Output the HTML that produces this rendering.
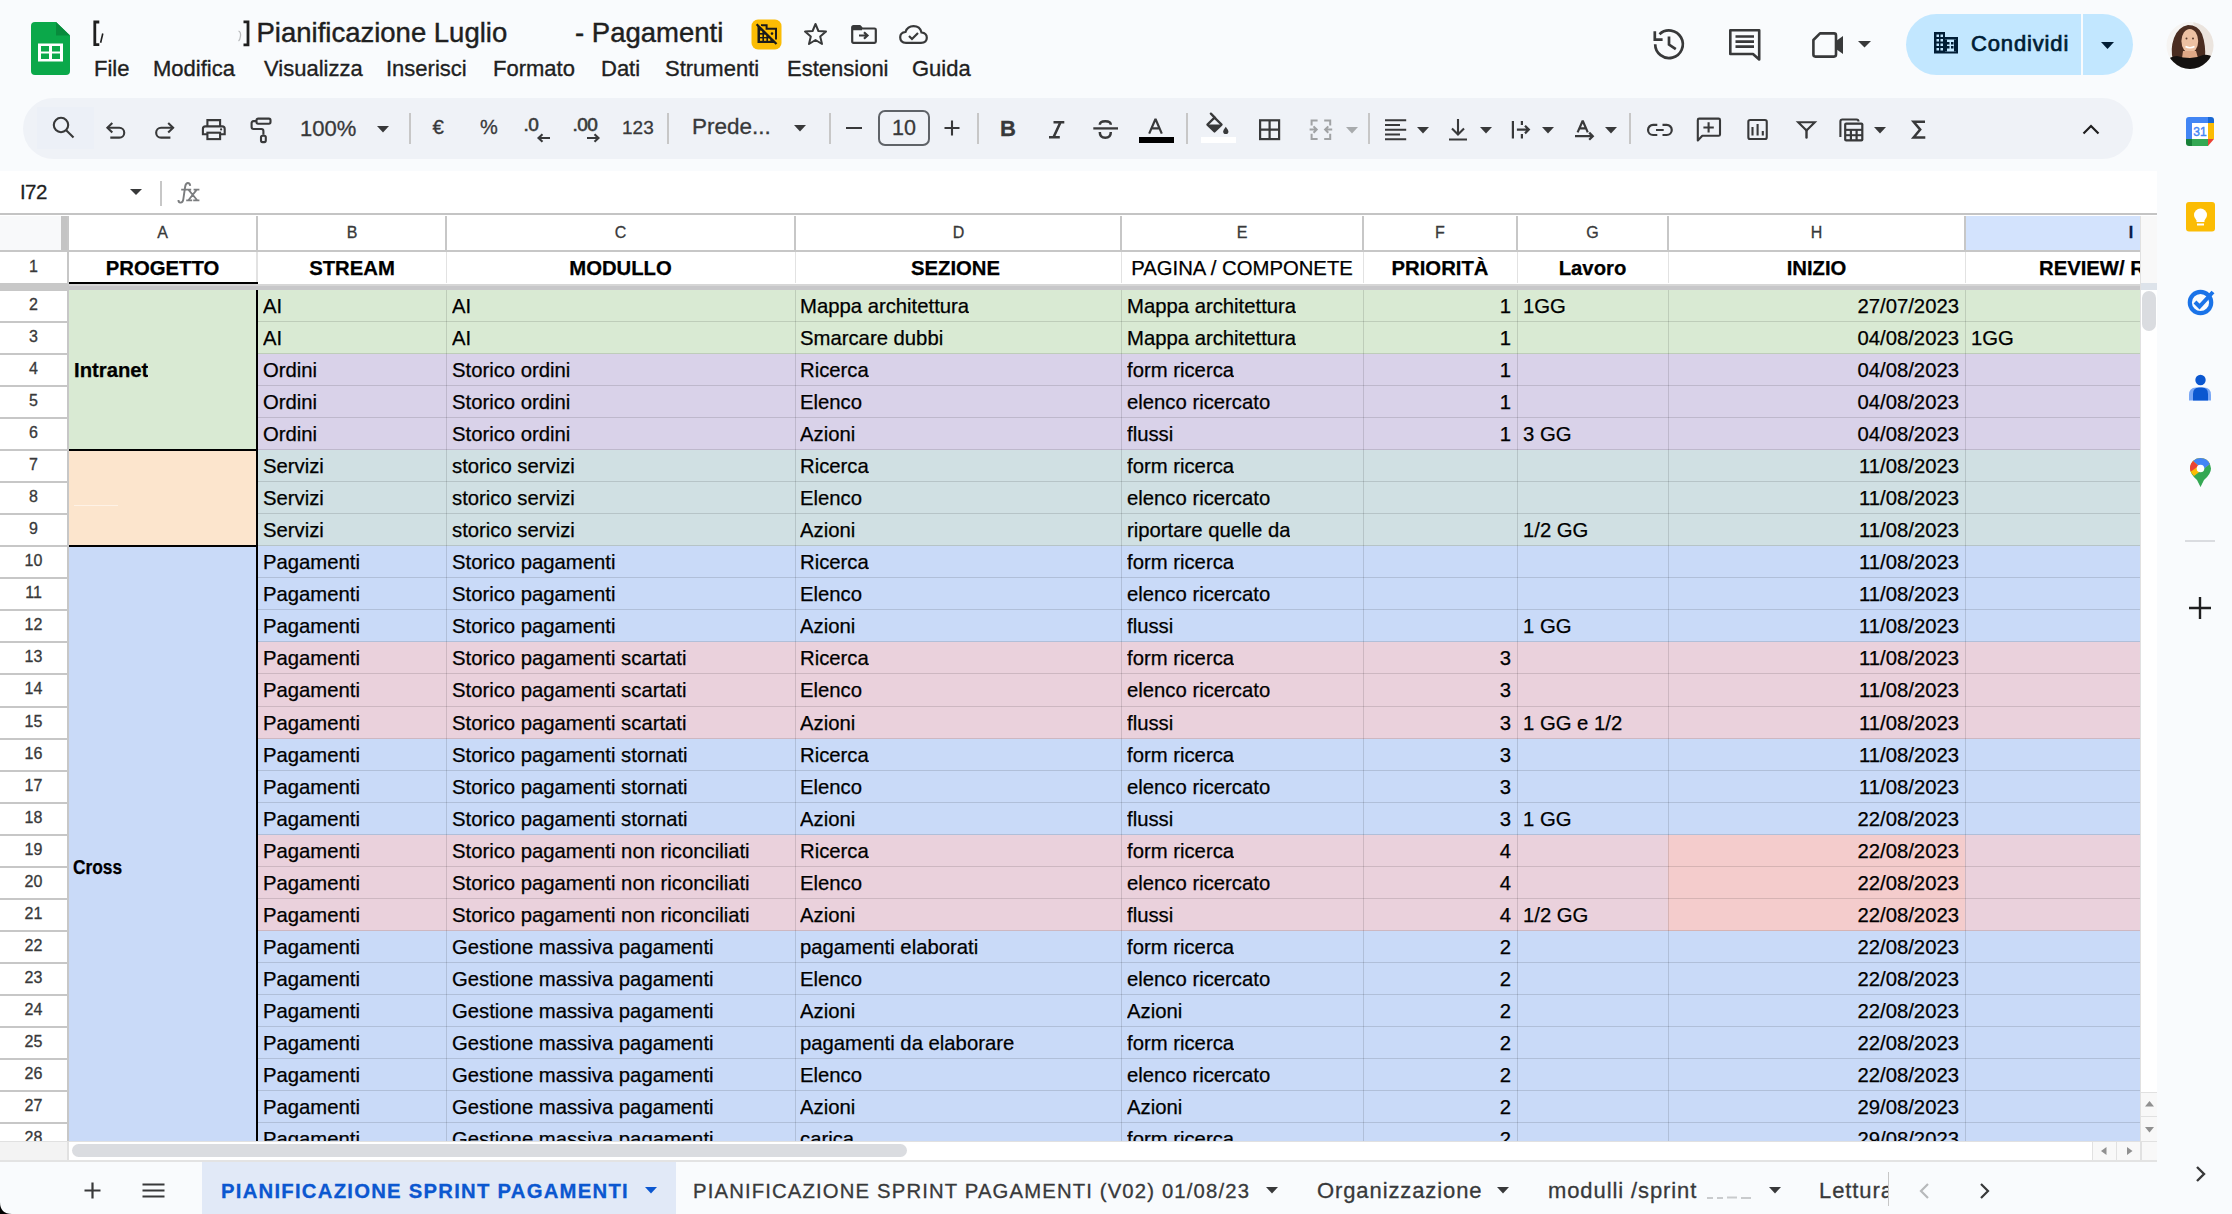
<!DOCTYPE html><html><head><meta charset="utf-8"><title>Sheets</title><style>
*{margin:0;padding:0;box-sizing:border-box}
html,body{width:2232px;height:1214px;overflow:hidden;background:#f9fbfd;font-family:"Liberation Sans", sans-serif;color:#1f1f1f}
.a{position:absolute}
.t{position:absolute;white-space:nowrap;line-height:1;-webkit-text-stroke:0.3px currentColor}
.c{position:absolute;white-space:nowrap;font-size:20.3px;line-height:32px;height:32px;color:#000;overflow:hidden;-webkit-text-stroke:0.25px #000}
.cb{font-weight:bold}
.r{text-align:right}
.ctr{text-align:center}
svg{position:absolute;overflow:visible}
.ic{fill:none;stroke:#38393a;stroke-width:2.2}
.fi{fill:#38393a;stroke:none}
</style></head><body>
<div style="position:absolute;left:2157px;top:0px;width:75px;height:1214px;background:#f9fbfd"></div>
<div style="position:absolute;left:0px;top:171px;width:2157px;height:990px;background:#fff"></div>
<div style="position:absolute;left:0px;top:213px;width:2157px;height:2px;background:#c4c4c4"></div>
<div style="position:absolute;left:0px;top:250px;width:2140px;height:2px;background:#c7c7c7"></div>
<div style="position:absolute;left:0px;top:216px;width:61px;height:34px;background:#f8f9fa"></div>
<div style="position:absolute;left:61px;top:216px;width:6px;height:34px;background:#c4c4c4"></div>
<div style="position:absolute;left:1966px;top:216px;width:174px;height:34px;background:#d3e3fd"></div>
<div style="position:absolute;left:67px;top:216px;width:2px;height:34px;background:#c7c7c7"></div>
<div style="position:absolute;left:256px;top:216px;width:2px;height:34px;background:#c7c7c7"></div>
<div style="position:absolute;left:445px;top:216px;width:2px;height:34px;background:#c7c7c7"></div>
<div style="position:absolute;left:794px;top:216px;width:2px;height:34px;background:#c7c7c7"></div>
<div style="position:absolute;left:1120px;top:216px;width:2px;height:34px;background:#c7c7c7"></div>
<div style="position:absolute;left:1362px;top:216px;width:2px;height:34px;background:#c7c7c7"></div>
<div style="position:absolute;left:1516px;top:216px;width:2px;height:34px;background:#c7c7c7"></div>
<div style="position:absolute;left:1667px;top:216px;width:2px;height:34px;background:#c7c7c7"></div>
<div style="position:absolute;left:1964px;top:216px;width:2px;height:34px;background:#c7c7c7"></div>
<div class="t" style="left:122.5px;top:225px;width:80px;text-align:center;font-size:16px;color:#38393a;font-weight:normal">A</div>
<div class="t" style="left:312.0px;top:225px;width:80px;text-align:center;font-size:16px;color:#38393a;font-weight:normal">B</div>
<div class="t" style="left:580.5px;top:225px;width:80px;text-align:center;font-size:16px;color:#38393a;font-weight:normal">C</div>
<div class="t" style="left:918.5px;top:225px;width:80px;text-align:center;font-size:16px;color:#38393a;font-weight:normal">D</div>
<div class="t" style="left:1202.0px;top:225px;width:80px;text-align:center;font-size:16px;color:#38393a;font-weight:normal">E</div>
<div class="t" style="left:1400.0px;top:225px;width:80px;text-align:center;font-size:16px;color:#38393a;font-weight:normal">F</div>
<div class="t" style="left:1552.5px;top:225px;width:80px;text-align:center;font-size:16px;color:#38393a;font-weight:normal">G</div>
<div class="t" style="left:1776.5px;top:225px;width:80px;text-align:center;font-size:16px;color:#38393a;font-weight:normal">H</div>
<div class="t" style="left:2091.0px;top:225px;width:80px;text-align:center;font-size:16px;color:#041e49;font-weight:bold">I</div>
<div style="position:absolute;left:67px;top:216px;width:2px;height:925px;background:#c7c7c7"></div>
<div style="position:absolute;left:0px;top:250px;width:67px;height:2px;background:#c7c7c7"></div>
<div style="position:absolute;left:0px;top:289px;width:67px;height:2px;background:#c7c7c7"></div>
<div style="position:absolute;left:0px;top:321px;width:67px;height:2px;background:#c7c7c7"></div>
<div style="position:absolute;left:0px;top:353px;width:67px;height:2px;background:#c7c7c7"></div>
<div style="position:absolute;left:0px;top:385px;width:67px;height:2px;background:#c7c7c7"></div>
<div style="position:absolute;left:0px;top:417px;width:67px;height:2px;background:#c7c7c7"></div>
<div style="position:absolute;left:0px;top:449px;width:67px;height:2px;background:#c7c7c7"></div>
<div style="position:absolute;left:0px;top:481px;width:67px;height:2px;background:#c7c7c7"></div>
<div style="position:absolute;left:0px;top:513px;width:67px;height:2px;background:#c7c7c7"></div>
<div style="position:absolute;left:0px;top:545px;width:67px;height:2px;background:#c7c7c7"></div>
<div style="position:absolute;left:0px;top:577px;width:67px;height:2px;background:#c7c7c7"></div>
<div style="position:absolute;left:0px;top:609px;width:67px;height:2px;background:#c7c7c7"></div>
<div style="position:absolute;left:0px;top:641px;width:67px;height:2px;background:#c7c7c7"></div>
<div style="position:absolute;left:0px;top:673px;width:67px;height:2px;background:#c7c7c7"></div>
<div style="position:absolute;left:0px;top:706px;width:67px;height:2px;background:#c7c7c7"></div>
<div style="position:absolute;left:0px;top:738px;width:67px;height:2px;background:#c7c7c7"></div>
<div style="position:absolute;left:0px;top:770px;width:67px;height:2px;background:#c7c7c7"></div>
<div style="position:absolute;left:0px;top:802px;width:67px;height:2px;background:#c7c7c7"></div>
<div style="position:absolute;left:0px;top:834px;width:67px;height:2px;background:#c7c7c7"></div>
<div style="position:absolute;left:0px;top:866px;width:67px;height:2px;background:#c7c7c7"></div>
<div style="position:absolute;left:0px;top:898px;width:67px;height:2px;background:#c7c7c7"></div>
<div style="position:absolute;left:0px;top:930px;width:67px;height:2px;background:#c7c7c7"></div>
<div style="position:absolute;left:0px;top:962px;width:67px;height:2px;background:#c7c7c7"></div>
<div style="position:absolute;left:0px;top:994px;width:67px;height:2px;background:#c7c7c7"></div>
<div style="position:absolute;left:0px;top:1026px;width:67px;height:2px;background:#c7c7c7"></div>
<div style="position:absolute;left:0px;top:1058px;width:67px;height:2px;background:#c7c7c7"></div>
<div style="position:absolute;left:0px;top:1090px;width:67px;height:2px;background:#c7c7c7"></div>
<div style="position:absolute;left:0px;top:1122px;width:67px;height:2px;background:#c7c7c7"></div>
<div class="t" style="left:0px;top:259px;width:67px;text-align:center;font-size:16px;color:#38393a">1</div>
<div class="t" style="left:0px;top:297px;width:67px;text-align:center;font-size:16px;color:#38393a">2</div>
<div class="t" style="left:0px;top:329px;width:67px;text-align:center;font-size:16px;color:#38393a">3</div>
<div class="t" style="left:0px;top:361px;width:67px;text-align:center;font-size:16px;color:#38393a">4</div>
<div class="t" style="left:0px;top:393px;width:67px;text-align:center;font-size:16px;color:#38393a">5</div>
<div class="t" style="left:0px;top:425px;width:67px;text-align:center;font-size:16px;color:#38393a">6</div>
<div class="t" style="left:0px;top:457px;width:67px;text-align:center;font-size:16px;color:#38393a">7</div>
<div class="t" style="left:0px;top:489px;width:67px;text-align:center;font-size:16px;color:#38393a">8</div>
<div class="t" style="left:0px;top:521px;width:67px;text-align:center;font-size:16px;color:#38393a">9</div>
<div class="t" style="left:0px;top:553px;width:67px;text-align:center;font-size:16px;color:#38393a">10</div>
<div class="t" style="left:0px;top:585px;width:67px;text-align:center;font-size:16px;color:#38393a">11</div>
<div class="t" style="left:0px;top:617px;width:67px;text-align:center;font-size:16px;color:#38393a">12</div>
<div class="t" style="left:0px;top:649px;width:67px;text-align:center;font-size:16px;color:#38393a">13</div>
<div class="t" style="left:0px;top:681px;width:67px;text-align:center;font-size:16px;color:#38393a">14</div>
<div class="t" style="left:0px;top:714px;width:67px;text-align:center;font-size:16px;color:#38393a">15</div>
<div class="t" style="left:0px;top:746px;width:67px;text-align:center;font-size:16px;color:#38393a">16</div>
<div class="t" style="left:0px;top:778px;width:67px;text-align:center;font-size:16px;color:#38393a">17</div>
<div class="t" style="left:0px;top:810px;width:67px;text-align:center;font-size:16px;color:#38393a">18</div>
<div class="t" style="left:0px;top:842px;width:67px;text-align:center;font-size:16px;color:#38393a">19</div>
<div class="t" style="left:0px;top:874px;width:67px;text-align:center;font-size:16px;color:#38393a">20</div>
<div class="t" style="left:0px;top:906px;width:67px;text-align:center;font-size:16px;color:#38393a">21</div>
<div class="t" style="left:0px;top:938px;width:67px;text-align:center;font-size:16px;color:#38393a">22</div>
<div class="t" style="left:0px;top:970px;width:67px;text-align:center;font-size:16px;color:#38393a">23</div>
<div class="t" style="left:0px;top:1002px;width:67px;text-align:center;font-size:16px;color:#38393a">24</div>
<div class="t" style="left:0px;top:1034px;width:67px;text-align:center;font-size:16px;color:#38393a">25</div>
<div class="t" style="left:0px;top:1066px;width:67px;text-align:center;font-size:16px;color:#38393a">26</div>
<div class="t" style="left:0px;top:1098px;width:67px;text-align:center;font-size:16px;color:#38393a">27</div>
<div class="t" style="left:0px;top:1130px;width:67px;text-align:center;font-size:16px;color:#38393a">28</div>
<div style="position:absolute;left:256px;top:252px;width:1px;height:31px;background:#e2e2e2"></div>
<div style="position:absolute;left:257px;top:252px;width:1px;height:31px;background:#e2e2e2"></div>
<div style="position:absolute;left:446px;top:252px;width:1px;height:31px;background:#e2e2e2"></div>
<div style="position:absolute;left:795px;top:252px;width:1px;height:31px;background:#e2e2e2"></div>
<div style="position:absolute;left:1121px;top:252px;width:1px;height:31px;background:#e2e2e2"></div>
<div style="position:absolute;left:1363px;top:252px;width:1px;height:31px;background:#e2e2e2"></div>
<div style="position:absolute;left:1517px;top:252px;width:1px;height:31px;background:#e2e2e2"></div>
<div style="position:absolute;left:1668px;top:252px;width:1px;height:31px;background:#e2e2e2"></div>
<div style="position:absolute;left:1965px;top:252px;width:1px;height:31px;background:#e2e2e2"></div>
<div class="c cb ctr" style="left:69px;top:252px;width:187px">PROGETTO</div>
<div class="c cb ctr" style="left:258px;top:252px;width:188px">STREAM</div>
<div class="c cb ctr" style="left:447px;top:252px;width:347px">MODULLO</div>
<div class="c cb ctr" style="left:793px;top:252px;width:325px">SEZIONE</div>
<div class="c  ctr" style="left:1122px;top:252px;width:240px">PAGINA / COMPONETE</div>
<div class="c cb ctr" style="left:1364px;top:252px;width:152px">PRIORITÀ</div>
<div class="c cb ctr" style="left:1518px;top:252px;width:149px">Lavoro</div>
<div class="c cb ctr" style="left:1669px;top:252px;width:295px">INIZIO</div>
<div class="a" style="left:1966px;top:252px;width:174px;height:32px;overflow:hidden"><div class="c cb" style="left:73px;top:0">REVIEW/ RILASCIO</div></div>
<div style="position:absolute;left:69px;top:282px;width:189px;height:2px;background:#000"></div>
<div style="position:absolute;left:0px;top:283px;width:67px;height:7px;background:#c8c8c8"></div>
<div style="position:absolute;left:69px;top:284px;width:2071px;height:2px;background:#d6d6d6"></div>
<div style="position:absolute;left:69px;top:286px;width:2071px;height:4px;background:#c7c7c9"></div>
<div style="position:absolute;left:67px;top:283px;width:2px;height:7px;background:#c8c8c8"></div>
<div style="position:absolute;left:257px;top:290px;width:1883px;height:32px;background:#d9ead3"></div><div style="position:absolute;left:257px;top:322px;width:1883px;height:32px;background:#d9ead3"></div><div style="position:absolute;left:257px;top:354px;width:1883px;height:32px;background:#d9d2e9"></div><div style="position:absolute;left:257px;top:386px;width:1883px;height:32px;background:#d9d2e9"></div><div style="position:absolute;left:257px;top:418px;width:1883px;height:32px;background:#d9d2e9"></div><div style="position:absolute;left:257px;top:450px;width:1883px;height:32px;background:#d0e0e3"></div><div style="position:absolute;left:257px;top:482px;width:1883px;height:32px;background:#d0e0e3"></div><div style="position:absolute;left:257px;top:514px;width:1883px;height:32px;background:#d0e0e3"></div><div style="position:absolute;left:257px;top:546px;width:1883px;height:32px;background:#c9daf8"></div><div style="position:absolute;left:257px;top:578px;width:1883px;height:32px;background:#c9daf8"></div><div style="position:absolute;left:257px;top:610px;width:1883px;height:32px;background:#c9daf8"></div><div style="position:absolute;left:257px;top:642px;width:1883px;height:32px;background:#ead1dc"></div><div style="position:absolute;left:257px;top:674px;width:1883px;height:33px;background:#ead1dc"></div><div style="position:absolute;left:257px;top:707px;width:1883px;height:32px;background:#ead1dc"></div><div style="position:absolute;left:257px;top:739px;width:1883px;height:32px;background:#c9daf8"></div><div style="position:absolute;left:257px;top:771px;width:1883px;height:32px;background:#c9daf8"></div><div style="position:absolute;left:257px;top:803px;width:1883px;height:32px;background:#c9daf8"></div><div style="position:absolute;left:257px;top:835px;width:1883px;height:32px;background:#ead1dc"></div><div style="position:absolute;left:1668px;top:835px;width:297px;height:32px;background:#f4cccc"></div><div style="position:absolute;left:257px;top:867px;width:1883px;height:32px;background:#ead1dc"></div><div style="position:absolute;left:1668px;top:867px;width:297px;height:32px;background:#f4cccc"></div><div style="position:absolute;left:257px;top:899px;width:1883px;height:32px;background:#ead1dc"></div><div style="position:absolute;left:1668px;top:899px;width:297px;height:32px;background:#f4cccc"></div><div style="position:absolute;left:257px;top:931px;width:1883px;height:32px;background:#c9daf8"></div><div style="position:absolute;left:257px;top:963px;width:1883px;height:32px;background:#c9daf8"></div><div style="position:absolute;left:257px;top:995px;width:1883px;height:32px;background:#c9daf8"></div><div style="position:absolute;left:257px;top:1027px;width:1883px;height:32px;background:#c9daf8"></div><div style="position:absolute;left:257px;top:1059px;width:1883px;height:32px;background:#c9daf8"></div><div style="position:absolute;left:257px;top:1091px;width:1883px;height:32px;background:#c9daf8"></div><div style="position:absolute;left:257px;top:1123px;width:1883px;height:18px;background:#c9daf8"></div><div style="position:absolute;left:69px;top:290px;width:188px;height:160px;background:#d9ead3"></div><div style="position:absolute;left:69px;top:450px;width:188px;height:96px;background:#fce5cd"></div><div style="position:absolute;left:69px;top:546px;width:188px;height:595px;background:#c9daf8"></div>
<div style="position:absolute;left:258px;top:321px;width:1882px;height:1px;background:rgba(0,0,0,0.12)"></div>
<div style="position:absolute;left:258px;top:353px;width:1882px;height:1px;background:rgba(0,0,0,0.12)"></div>
<div style="position:absolute;left:258px;top:385px;width:1882px;height:1px;background:rgba(0,0,0,0.12)"></div>
<div style="position:absolute;left:258px;top:417px;width:1882px;height:1px;background:rgba(0,0,0,0.12)"></div>
<div style="position:absolute;left:258px;top:449px;width:1882px;height:1px;background:rgba(0,0,0,0.12)"></div>
<div style="position:absolute;left:258px;top:481px;width:1882px;height:1px;background:rgba(0,0,0,0.12)"></div>
<div style="position:absolute;left:258px;top:513px;width:1882px;height:1px;background:rgba(0,0,0,0.12)"></div>
<div style="position:absolute;left:258px;top:545px;width:1882px;height:1px;background:rgba(0,0,0,0.12)"></div>
<div style="position:absolute;left:258px;top:577px;width:1882px;height:1px;background:rgba(0,0,0,0.12)"></div>
<div style="position:absolute;left:258px;top:609px;width:1882px;height:1px;background:rgba(0,0,0,0.12)"></div>
<div style="position:absolute;left:258px;top:641px;width:1882px;height:1px;background:rgba(0,0,0,0.12)"></div>
<div style="position:absolute;left:258px;top:673px;width:1882px;height:1px;background:rgba(0,0,0,0.12)"></div>
<div style="position:absolute;left:258px;top:706px;width:1882px;height:1px;background:rgba(0,0,0,0.12)"></div>
<div style="position:absolute;left:258px;top:738px;width:1882px;height:1px;background:rgba(0,0,0,0.12)"></div>
<div style="position:absolute;left:258px;top:770px;width:1882px;height:1px;background:rgba(0,0,0,0.12)"></div>
<div style="position:absolute;left:258px;top:802px;width:1882px;height:1px;background:rgba(0,0,0,0.12)"></div>
<div style="position:absolute;left:258px;top:834px;width:1882px;height:1px;background:rgba(0,0,0,0.12)"></div>
<div style="position:absolute;left:258px;top:866px;width:1882px;height:1px;background:rgba(0,0,0,0.12)"></div>
<div style="position:absolute;left:258px;top:898px;width:1882px;height:1px;background:rgba(0,0,0,0.12)"></div>
<div style="position:absolute;left:258px;top:930px;width:1882px;height:1px;background:rgba(0,0,0,0.12)"></div>
<div style="position:absolute;left:258px;top:962px;width:1882px;height:1px;background:rgba(0,0,0,0.12)"></div>
<div style="position:absolute;left:258px;top:994px;width:1882px;height:1px;background:rgba(0,0,0,0.12)"></div>
<div style="position:absolute;left:258px;top:1026px;width:1882px;height:1px;background:rgba(0,0,0,0.12)"></div>
<div style="position:absolute;left:258px;top:1058px;width:1882px;height:1px;background:rgba(0,0,0,0.12)"></div>
<div style="position:absolute;left:258px;top:1090px;width:1882px;height:1px;background:rgba(0,0,0,0.12)"></div>
<div style="position:absolute;left:258px;top:1122px;width:1882px;height:1px;background:rgba(0,0,0,0.12)"></div>
<div style="position:absolute;left:446px;top:290px;width:1px;height:851px;background:rgba(0,0,0,0.12)"></div>
<div style="position:absolute;left:795px;top:290px;width:1px;height:851px;background:rgba(0,0,0,0.12)"></div>
<div style="position:absolute;left:1121px;top:290px;width:1px;height:851px;background:rgba(0,0,0,0.12)"></div>
<div style="position:absolute;left:1363px;top:290px;width:1px;height:851px;background:rgba(0,0,0,0.12)"></div>
<div style="position:absolute;left:1517px;top:290px;width:1px;height:851px;background:rgba(0,0,0,0.12)"></div>
<div style="position:absolute;left:1668px;top:290px;width:1px;height:851px;background:rgba(0,0,0,0.12)"></div>
<div style="position:absolute;left:1965px;top:290px;width:1px;height:851px;background:rgba(0,0,0,0.12)"></div>
<div style="position:absolute;left:256px;top:290px;width:2px;height:851px;background:#000"></div>
<div style="position:absolute;left:69px;top:449px;width:189px;height:2px;background:#000"></div>
<div style="position:absolute;left:69px;top:545px;width:189px;height:2px;background:#000"></div>
<div class="a" style="left:0;top:0;width:2140px;height:1141px;overflow:hidden"><div class="c" style="left:263px;top:290px">AI</div><div class="c" style="left:452px;top:290px">AI</div><div class="c" style="left:800px;top:290px">Mappa architettura</div><div class="c" style="left:1127px;top:290px">Mappa architettura</div><div class="c r" style="left:1364px;top:290px;width:147px">1</div><div class="c" style="left:1523px;top:290px">1GG</div><div class="c r" style="left:1669px;top:290px;width:290px">27/07/2023</div><div class="c" style="left:263px;top:322px">AI</div><div class="c" style="left:452px;top:322px">AI</div><div class="c" style="left:800px;top:322px">Smarcare dubbi</div><div class="c" style="left:1127px;top:322px">Mappa architettura</div><div class="c r" style="left:1364px;top:322px;width:147px">1</div><div class="c r" style="left:1669px;top:322px;width:290px">04/08/2023</div><div class="c" style="left:1971px;top:322px">1GG</div><div class="c" style="left:263px;top:354px">Ordini</div><div class="c" style="left:452px;top:354px">Storico ordini</div><div class="c" style="left:800px;top:354px">Ricerca</div><div class="c" style="left:1127px;top:354px">form ricerca</div><div class="c r" style="left:1364px;top:354px;width:147px">1</div><div class="c r" style="left:1669px;top:354px;width:290px">04/08/2023</div><div class="c" style="left:263px;top:386px">Ordini</div><div class="c" style="left:452px;top:386px">Storico ordini</div><div class="c" style="left:800px;top:386px">Elenco</div><div class="c" style="left:1127px;top:386px">elenco ricercato</div><div class="c r" style="left:1364px;top:386px;width:147px">1</div><div class="c r" style="left:1669px;top:386px;width:290px">04/08/2023</div><div class="c" style="left:263px;top:418px">Ordini</div><div class="c" style="left:452px;top:418px">Storico ordini</div><div class="c" style="left:800px;top:418px">Azioni</div><div class="c" style="left:1127px;top:418px">flussi</div><div class="c r" style="left:1364px;top:418px;width:147px">1</div><div class="c" style="left:1523px;top:418px">3 GG</div><div class="c r" style="left:1669px;top:418px;width:290px">04/08/2023</div><div class="c" style="left:263px;top:450px">Servizi</div><div class="c" style="left:452px;top:450px">storico servizi</div><div class="c" style="left:800px;top:450px">Ricerca</div><div class="c" style="left:1127px;top:450px">form ricerca</div><div class="c r" style="left:1669px;top:450px;width:290px">11/08/2023</div><div class="c" style="left:263px;top:482px">Servizi</div><div class="c" style="left:452px;top:482px">storico servizi</div><div class="c" style="left:800px;top:482px">Elenco</div><div class="c" style="left:1127px;top:482px">elenco ricercato</div><div class="c r" style="left:1669px;top:482px;width:290px">11/08/2023</div><div class="c" style="left:263px;top:514px">Servizi</div><div class="c" style="left:452px;top:514px">storico servizi</div><div class="c" style="left:800px;top:514px">Azioni</div><div class="c" style="left:1127px;top:514px">riportare quelle da</div><div class="c" style="left:1523px;top:514px">1/2 GG</div><div class="c r" style="left:1669px;top:514px;width:290px">11/08/2023</div><div class="c" style="left:263px;top:546px">Pagamenti</div><div class="c" style="left:452px;top:546px">Storico pagamenti</div><div class="c" style="left:800px;top:546px">Ricerca</div><div class="c" style="left:1127px;top:546px">form ricerca</div><div class="c r" style="left:1669px;top:546px;width:290px">11/08/2023</div><div class="c" style="left:263px;top:578px">Pagamenti</div><div class="c" style="left:452px;top:578px">Storico pagamenti</div><div class="c" style="left:800px;top:578px">Elenco</div><div class="c" style="left:1127px;top:578px">elenco ricercato</div><div class="c r" style="left:1669px;top:578px;width:290px">11/08/2023</div><div class="c" style="left:263px;top:610px">Pagamenti</div><div class="c" style="left:452px;top:610px">Storico pagamenti</div><div class="c" style="left:800px;top:610px">Azioni</div><div class="c" style="left:1127px;top:610px">flussi</div><div class="c" style="left:1523px;top:610px">1 GG</div><div class="c r" style="left:1669px;top:610px;width:290px">11/08/2023</div><div class="c" style="left:263px;top:642px">Pagamenti</div><div class="c" style="left:452px;top:642px">Storico pagamenti scartati</div><div class="c" style="left:800px;top:642px">Ricerca</div><div class="c" style="left:1127px;top:642px">form ricerca</div><div class="c r" style="left:1364px;top:642px;width:147px">3</div><div class="c r" style="left:1669px;top:642px;width:290px">11/08/2023</div><div class="c" style="left:263px;top:674px">Pagamenti</div><div class="c" style="left:452px;top:674px">Storico pagamenti scartati</div><div class="c" style="left:800px;top:674px">Elenco</div><div class="c" style="left:1127px;top:674px">elenco ricercato</div><div class="c r" style="left:1364px;top:674px;width:147px">3</div><div class="c r" style="left:1669px;top:674px;width:290px">11/08/2023</div><div class="c" style="left:263px;top:707px">Pagamenti</div><div class="c" style="left:452px;top:707px">Storico pagamenti scartati</div><div class="c" style="left:800px;top:707px">Azioni</div><div class="c" style="left:1127px;top:707px">flussi</div><div class="c r" style="left:1364px;top:707px;width:147px">3</div><div class="c" style="left:1523px;top:707px">1 GG e 1/2</div><div class="c r" style="left:1669px;top:707px;width:290px">11/08/2023</div><div class="c" style="left:263px;top:739px">Pagamenti</div><div class="c" style="left:452px;top:739px">Storico pagamenti stornati</div><div class="c" style="left:800px;top:739px">Ricerca</div><div class="c" style="left:1127px;top:739px">form ricerca</div><div class="c r" style="left:1364px;top:739px;width:147px">3</div><div class="c r" style="left:1669px;top:739px;width:290px">11/08/2023</div><div class="c" style="left:263px;top:771px">Pagamenti</div><div class="c" style="left:452px;top:771px">Storico pagamenti stornati</div><div class="c" style="left:800px;top:771px">Elenco</div><div class="c" style="left:1127px;top:771px">elenco ricercato</div><div class="c r" style="left:1364px;top:771px;width:147px">3</div><div class="c r" style="left:1669px;top:771px;width:290px">11/08/2023</div><div class="c" style="left:263px;top:803px">Pagamenti</div><div class="c" style="left:452px;top:803px">Storico pagamenti stornati</div><div class="c" style="left:800px;top:803px">Azioni</div><div class="c" style="left:1127px;top:803px">flussi</div><div class="c r" style="left:1364px;top:803px;width:147px">3</div><div class="c" style="left:1523px;top:803px">1 GG</div><div class="c r" style="left:1669px;top:803px;width:290px">22/08/2023</div><div class="c" style="left:263px;top:835px">Pagamenti</div><div class="c" style="left:452px;top:835px">Storico pagamenti non riconciliati</div><div class="c" style="left:800px;top:835px">Ricerca</div><div class="c" style="left:1127px;top:835px">form ricerca</div><div class="c r" style="left:1364px;top:835px;width:147px">4</div><div class="c r" style="left:1669px;top:835px;width:290px">22/08/2023</div><div class="c" style="left:263px;top:867px">Pagamenti</div><div class="c" style="left:452px;top:867px">Storico pagamenti non riconciliati</div><div class="c" style="left:800px;top:867px">Elenco</div><div class="c" style="left:1127px;top:867px">elenco ricercato</div><div class="c r" style="left:1364px;top:867px;width:147px">4</div><div class="c r" style="left:1669px;top:867px;width:290px">22/08/2023</div><div class="c" style="left:263px;top:899px">Pagamenti</div><div class="c" style="left:452px;top:899px">Storico pagamenti non riconciliati</div><div class="c" style="left:800px;top:899px">Azioni</div><div class="c" style="left:1127px;top:899px">flussi</div><div class="c r" style="left:1364px;top:899px;width:147px">4</div><div class="c" style="left:1523px;top:899px">1/2 GG</div><div class="c r" style="left:1669px;top:899px;width:290px">22/08/2023</div><div class="c" style="left:263px;top:931px">Pagamenti</div><div class="c" style="left:452px;top:931px">Gestione massiva pagamenti</div><div class="c" style="left:800px;top:931px">pagamenti elaborati</div><div class="c" style="left:1127px;top:931px">form ricerca</div><div class="c r" style="left:1364px;top:931px;width:147px">2</div><div class="c r" style="left:1669px;top:931px;width:290px">22/08/2023</div><div class="c" style="left:263px;top:963px">Pagamenti</div><div class="c" style="left:452px;top:963px">Gestione massiva pagamenti</div><div class="c" style="left:800px;top:963px">Elenco</div><div class="c" style="left:1127px;top:963px">elenco ricercato</div><div class="c r" style="left:1364px;top:963px;width:147px">2</div><div class="c r" style="left:1669px;top:963px;width:290px">22/08/2023</div><div class="c" style="left:263px;top:995px">Pagamenti</div><div class="c" style="left:452px;top:995px">Gestione massiva pagamenti</div><div class="c" style="left:800px;top:995px">Azioni</div><div class="c" style="left:1127px;top:995px">Azioni</div><div class="c r" style="left:1364px;top:995px;width:147px">2</div><div class="c r" style="left:1669px;top:995px;width:290px">22/08/2023</div><div class="c" style="left:263px;top:1027px">Pagamenti</div><div class="c" style="left:452px;top:1027px">Gestione massiva pagamenti</div><div class="c" style="left:800px;top:1027px">pagamenti da elaborare</div><div class="c" style="left:1127px;top:1027px">form ricerca</div><div class="c r" style="left:1364px;top:1027px;width:147px">2</div><div class="c r" style="left:1669px;top:1027px;width:290px">22/08/2023</div><div class="c" style="left:263px;top:1059px">Pagamenti</div><div class="c" style="left:452px;top:1059px">Gestione massiva pagamenti</div><div class="c" style="left:800px;top:1059px">Elenco</div><div class="c" style="left:1127px;top:1059px">elenco ricercato</div><div class="c r" style="left:1364px;top:1059px;width:147px">2</div><div class="c r" style="left:1669px;top:1059px;width:290px">22/08/2023</div><div class="c" style="left:263px;top:1091px">Pagamenti</div><div class="c" style="left:452px;top:1091px">Gestione massiva pagamenti</div><div class="c" style="left:800px;top:1091px">Azioni</div><div class="c" style="left:1127px;top:1091px">Azioni</div><div class="c r" style="left:1364px;top:1091px;width:147px">2</div><div class="c r" style="left:1669px;top:1091px;width:290px">29/08/2023</div><div class="c" style="left:263px;top:1123px">Pagamenti</div><div class="c" style="left:452px;top:1123px">Gestione massiva pagamenti</div><div class="c" style="left:800px;top:1123px">carica</div><div class="c" style="left:1127px;top:1123px">form ricerca</div><div class="c r" style="left:1364px;top:1123px;width:147px">2</div><div class="c r" style="left:1669px;top:1123px;width:290px">29/08/2023</div></div>
<div class="c cb" style="left:74px;top:354.0px">Intranet</div>
<div class="c cb" style="left:73px;top:850.5px;transform:scaleX(0.855);transform-origin:0 0">Cross</div>
<div style="position:absolute;left:74px;top:505px;width:44px;height:1px;background:rgba(255,255,255,0.5)"></div>
<div style="position:absolute;left:2140px;top:216px;width:17px;height:925px;background:#fff"></div>
<div style="position:absolute;left:2140px;top:216px;width:1px;height:925px;background:#e1e1e1"></div>
<div style="position:absolute;left:2141px;top:216px;width:16px;height:67px;background:#f8f8f8"></div>
<div style="position:absolute;left:2141px;top:283px;width:16px;height:7px;background:#dde3ea"></div>
<div style="position:absolute;left:2142px;top:291px;width:14px;height:40px;background:#dadce0;border-radius:7px"></div>
<div style="position:absolute;left:2141px;top:1092px;width:16px;height:1px;background:#e1e1e1"></div>
<div style="position:absolute;left:2141px;top:1093px;width:16px;height:48px;background:#f8f8f8"></div>
<div style="position:absolute;left:2141px;top:1116px;width:16px;height:1px;background:#e1e1e1"></div>
<svg style="left:2145px;top:1101px" width="9" height="6"><path d="M0 5.5 L4.5 0 L9 5.5Z" fill="#909090"/></svg>
<svg style="left:2145px;top:1127px" width="9" height="6"><path d="M0 0 L4.5 5.5 L9 0Z" fill="#909090"/></svg>
<div style="position:absolute;left:0px;top:1141px;width:2157px;height:1px;background:#e1e1e1"></div>
<div style="position:absolute;left:0px;top:1142px;width:67px;height:18px;background:#f3f3f3"></div>
<div style="position:absolute;left:67px;top:1142px;width:2px;height:18px;background:#e1e1e1"></div>
<div style="position:absolute;left:69px;top:1142px;width:2088px;height:18px;background:#fff"></div>
<div style="position:absolute;left:72px;top:1144px;width:835px;height:13px;background:#dadce0;border-radius:7px"></div>
<div style="position:absolute;left:2092px;top:1142px;width:49px;height:18px;background:#f8f8f8"></div>
<div style="position:absolute;left:2092px;top:1142px;width:1px;height:18px;background:#e1e1e1"></div>
<div style="position:absolute;left:2116px;top:1142px;width:1px;height:18px;background:#e1e1e1"></div>
<div style="position:absolute;left:2140px;top:1142px;width:17px;height:18px;background:#f8f8f8"></div>
<div style="position:absolute;left:2140px;top:1142px;width:2px;height:18px;background:#e1e1e1"></div>
<svg style="left:2101px;top:1147px" width="6" height="8"><path d="M5.5 0 L0 4 L5.5 8Z" fill="#909090"/></svg>
<svg style="left:2127px;top:1147px" width="6" height="8"><path d="M0 0 L5.5 4 L0 8Z" fill="#909090"/></svg>
<div style="position:absolute;left:0px;top:1160px;width:2157px;height:2px;background:#e3e3e3"></div>
<div class="t" style="left:20px;top:181.5px;font-size:20.5px;color:#1f1f1f;letter-spacing:-0.6px">I72</div>
<svg style="left:130px;top:189px" width="12" height="6"><path d="M0 0 L12 0 L6 6Z" fill="#38393a"/></svg>
<div style="position:absolute;left:160px;top:181px;width:2px;height:25px;background:#c7c7c7"></div>
<svg style="left:172px;top:178px" width="32" height="30" viewBox="172 178 32 30"><path d="M190.2 185.8 Q189.9 182.8 187.6 183 Q185.6 183.3 185.1 187 L183.3 199.3 Q182.8 202.8 180.4 202.6 Q178.3 202.4 178.5 200" fill="none" stroke="#7b7d7f" stroke-width="1.9"/><path d="M181.2 189.6 H191.2 M193.6 189.6 H199.4 M186.2 200.3 H192.2 M193.2 200.3 H199.4 M188.4 189.6 L197.2 200.3 M196.8 189.6 L188.4 200.3" fill="none" stroke="#7b7d7f" stroke-width="1.8"/></svg>
<svg style="left:84px;top:1182px" width="17" height="17" viewBox="0 0 17 17"><path d="M8.5 0.5V16.5M0.5 8.5H16.5" stroke="#38393a" stroke-width="2.2" fill="none"/></svg>
<svg style="left:142px;top:1183px" width="23" height="15" viewBox="0 0 23 15"><path d="M0.5 1.5H22.5M0.5 7.5H22.5M0.5 13.5H22.5" stroke="#38393a" stroke-width="2.2" fill="none"/></svg>
<div style="position:absolute;left:202px;top:1162px;width:474px;height:52px;background:#e1e9f7"></div>
<div class="t" style="left:221px;top:1181px;font-size:20.3px;font-weight:bold;color:#0b57d0;letter-spacing:1.25px">PIANIFICAZIONE SPRINT PAGAMENTI</div>
<svg style="left:645px;top:1187px" width="12" height="7"><path d="M0 0 L12 0 L6 6.5Z" fill="#0b57d0"/></svg>
<div class="t" style="left:693px;top:1181px;font-size:20.3px;color:#38393a;letter-spacing:1.15px">PIANIFICAZIONE SPRINT PAGAMENTI (V02) 01/08/23</div>
<svg style="left:1266px;top:1187px" width="12" height="7"><path d="M0 0 L12 0 L6 6.5Z" fill="#38393a"/></svg>
<div class="t" style="left:1317px;top:1180px;font-size:22px;color:#38393a;letter-spacing:0.9px">Organizzazione</div>
<svg style="left:1497px;top:1187px" width="12" height="7"><path d="M0 0 L12 0 L6 6.5Z" fill="#38393a"/></svg>
<div class="t" style="left:1548px;top:1180px;font-size:22px;color:#38393a;letter-spacing:0.9px">modulli /sprint</div>
<svg style="left:1769px;top:1187px" width="12" height="7"><path d="M0 0 L12 0 L6 6.5Z" fill="#38393a"/></svg>
<svg style="left:1705px;top:1194px" width="48" height="6" viewBox="0 0 48 6"><path d="M2 4 H8 M12 4 H18 M22 3.5 H32 M36 4 H46" stroke="#c9cbcd" stroke-width="2"/></svg>
<div class="a" style="left:1819px;top:1170px;width:69px;height:40px;overflow:hidden"><div class="t" style="left:0;top:10px;font-size:22px;color:#38393a;letter-spacing:0.9px">Lettura</div></div>
<div style="position:absolute;left:1888px;top:1172px;width:1px;height:34px;background:#c7c7c7"></div>
<svg style="left:1918px;top:1183px" width="12" height="16" viewBox="0 0 12 16"><path d="M10 1 L3 8 L10 15" stroke="#b7b9bb" stroke-width="2.2" fill="none"/></svg>
<svg style="left:1979px;top:1183px" width="12" height="16" viewBox="0 0 12 16"><path d="M2 1 L9 8 L2 15" stroke="#38393a" stroke-width="2.2" fill="none"/></svg>
<svg style="left:2195px;top:1166px" width="12" height="16" viewBox="0 0 12 16"><path d="M2 1 L9 8 L2 15" stroke="#38393a" stroke-width="2.4" fill="none"/></svg>
<svg style="left:0;top:1202px" width="12" height="12" viewBox="0 0 12 12"><path d="M0 0 Q0 12 12 12 L0 12Z" fill="#000"/></svg>
<svg style="left:31px;top:22px" width="39" height="53" viewBox="0 0 39 53">
<path d="M4 0 H25 L39 13.5 V49 Q39 53 35 53 H4 Q0 53 0 49 V4 Q0 0 4 0Z" fill="#0ba84a"/>
<path d="M25 0 L39 13.5 H25Z" fill="#088b3c"/>
<rect x="7" y="21.5" width="25" height="18" fill="#fff"/>
<rect x="10" y="24" width="8" height="5.5" fill="#0ba84a"/><rect x="21" y="24" width="8" height="5.5" fill="#0ba84a"/>
<rect x="10" y="31.5" width="8" height="5.5" fill="#0ba84a"/><rect x="21" y="31.5" width="8" height="5.5" fill="#0ba84a"/>
</svg>
<svg style="left:88px;top:16px" width="20" height="34" viewBox="88 16 20 34"><path d="M99.3 22 H94.8 V44.6 H99.3" fill="none" stroke="#1f1f1f" stroke-width="2.8"/><path d="M102.8 33.5 L100.6 42.8" stroke="#1f1f1f" stroke-width="1.6"/></svg>
<svg style="left:236px;top:16px" width="20" height="34" viewBox="236 16 20 34"><path d="M243.5 21.8 H248 V44.8 H243.5" fill="none" stroke="#1f1f1f" stroke-width="2.8"/><path d="M238.5 31 Q241 32 240.5 36 Q240 40 238.5 41" fill="none" stroke="#b9bbbd" stroke-width="1.3"/></svg>
<div class="t" style="left:256.5px;top:18.5px;font-size:27.5px;color:#1f1f1f;-webkit-text-stroke:0.45px #1f1f1f">Pianificazione Luglio</div>
<div class="t" style="left:575px;top:18.5px;font-size:27.5px;color:#1f1f1f;-webkit-text-stroke:0.45px #1f1f1f">- Pagamenti</div>
<div class="t" style="left:94px;top:57.5px;font-size:22px;color:#1f1f1f;-webkit-text-stroke:0.35px #1f1f1f">File</div>
<div class="t" style="left:153px;top:57.5px;font-size:22px;color:#1f1f1f;-webkit-text-stroke:0.35px #1f1f1f">Modifica</div>
<div class="t" style="left:264px;top:57.5px;font-size:22px;color:#1f1f1f;-webkit-text-stroke:0.35px #1f1f1f">Visualizza</div>
<div class="t" style="left:386px;top:57.5px;font-size:22px;color:#1f1f1f;-webkit-text-stroke:0.35px #1f1f1f">Inserisci</div>
<div class="t" style="left:493px;top:57.5px;font-size:22px;color:#1f1f1f;-webkit-text-stroke:0.35px #1f1f1f">Formato</div>
<div class="t" style="left:601px;top:57.5px;font-size:22px;color:#1f1f1f;-webkit-text-stroke:0.35px #1f1f1f">Dati</div>
<div class="t" style="left:665px;top:57.5px;font-size:22px;color:#1f1f1f;-webkit-text-stroke:0.35px #1f1f1f">Strumenti</div>
<div class="t" style="left:787px;top:57.5px;font-size:22px;color:#1f1f1f;-webkit-text-stroke:0.35px #1f1f1f">Estensioni</div>
<div class="t" style="left:912px;top:57.5px;font-size:22px;color:#1f1f1f;-webkit-text-stroke:0.35px #1f1f1f">Guida</div>
<svg style="left:740px;top:12px" width="50" height="44" viewBox="740 12 50 44">
<rect x="751.5" y="19.5" width="30" height="30" rx="6.5" fill="#fbbc04"/>
<path d="M757.5 26 L775 43 H757.5Z" fill="#1a1a1a"/>
<g fill="#fbbc04"><rect x="760" y="30.6" width="2.4" height="2.4"/><rect x="760" y="34.6" width="2.4" height="2.4"/><rect x="764" y="34.6" width="2.4" height="2.4"/><rect x="760" y="38.4" width="2.4" height="2.4"/><rect x="764" y="38.4" width="2.4" height="2.4"/><rect x="768" y="38.4" width="2.4" height="2.4"/></g>
<path d="M762 26 V25.2 H766.6 V28.7 H776 V39.5" fill="none" stroke="#1a1a1a" stroke-width="2"/>
<circle cx="772" cy="33.6" r="1.3" fill="#1a1a1a"/>
<path d="M756.6 24.3 L776.5 44" stroke="#1a1a1a" stroke-width="2.3"/>
</svg>
<svg style="left:803px;top:22px" width="25" height="24" viewBox="0 0 25 24">
<path d="M12.5 2 L15.4 9 L23 9.6 L17.2 14.5 L19 22 L12.5 18 L6 22 L7.8 14.5 L2 9.6 L9.6 9Z" fill="none" stroke="#38393a" stroke-width="2" stroke-linejoin="round"/>
</svg>
<svg style="left:851px;top:25px" width="26" height="19" viewBox="0 0 26 19">
<path d="M1.2 2.5 Q1.2 1.2 2.5 1.2 H9 L11 3.5 H23.5 Q24.8 3.5 24.8 4.8 V16.5 Q24.8 17.8 23.5 17.8 H2.5 Q1.2 17.8 1.2 16.5Z" fill="none" stroke="#38393a" stroke-width="2.2" stroke-linejoin="round"/><path d="M1.2 1.2 H9 L11 3.5 V5.2 H1.2Z" fill="#38393a"/>
<path d="M8 10.5 H16 M13 7.2 L16.5 10.5 L13 13.8" fill="none" stroke="#38393a" stroke-width="2.2"/>
</svg>
<svg style="left:899px;top:25px" width="29" height="19" viewBox="0 0 29 19">
<path d="M7 17.8 Q1.2 17.8 1.2 12.3 Q1.2 7.5 6.5 7 Q8.5 1.2 14.5 1.2 Q21 1.2 22.5 7.5 Q27.8 8 27.8 12.8 Q27.8 17.8 22 17.8Z" fill="none" stroke="#38393a" stroke-width="2.2"/>
<path d="M10 11 L13 14 L19 8" fill="none" stroke="#38393a" stroke-width="2.2"/>
</svg>
<svg style="left:1645px;top:22px" width="45" height="45" viewBox="1645 22 45 45">
<path d="M1655.2 44.2 A13.8 13.8 0 1 0 1659.5 34.2" fill="none" stroke="#38393a" stroke-width="2.7"/>
<path d="M1654.8 31.2 V39.6 H1662.6" fill="none" stroke="#38393a" stroke-width="2.7"/>
<path d="M1669 36.5 V44.6 L1675.8 49.2" fill="none" stroke="#38393a" stroke-width="2.7"/>
</svg>
<svg style="left:1729px;top:29px" width="32" height="32" viewBox="0 0 32 32">
<path d="M1.3 1.3 H30.2 V30.5 L24 25 H1.3Z" fill="none" stroke="#38393a" stroke-width="2.6" stroke-linejoin="round"/>
<path d="M6.5 7.5 H25 M6.5 12.6 H25 M6.5 17.6 H25" stroke="#38393a" stroke-width="2.6"/>
</svg>
<svg style="left:1812px;top:32px" width="33" height="26" viewBox="0 0 33 26">
<path d="M8 1.4 H22 Q24 1.4 24 3.4 V22.6 Q24 24.6 22 24.6 H3.4 Q1.4 24.6 1.4 22.6 V8Z" fill="none" stroke="#38393a" stroke-width="2.6" stroke-linejoin="round"/>
<path d="M24 9 L31 4 V22 L24 17Z" fill="#38393a"/>
</svg>
<svg style="left:1858px;top:41px" width="13" height="7"><path d="M0 0 L13 0 L6.5 6.5Z" fill="#38393a"/></svg>
<div style="position:absolute;left:1906px;top:14px;width:227px;height:61px;background:#c2e7ff;border-radius:31px"></div>
<div style="position:absolute;left:2081px;top:14px;width:2px;height:61px;background:#f9fbfd"></div>
<svg style="left:1934px;top:32px" width="25" height="22" viewBox="0 0 25 22">
<path d="M0 0 H11 V5 H24 V21.5 H0Z" fill="#001d35"/>
<g fill="#c2e7ff"><rect x="2.5" y="2.5" width="2.5" height="2.5"/><rect x="6.5" y="2.5" width="2.5" height="2.5"/>
<rect x="2.5" y="7" width="2.5" height="2.5"/><rect x="6.5" y="7" width="2.5" height="2.5"/>
<rect x="2.5" y="11.5" width="2.5" height="2.5"/><rect x="6.5" y="11.5" width="2.5" height="2.5"/><rect x="15" y="11.5" width="2.5" height="2.5"/><rect x="19" y="11.5" width="2.5" height="2.5"/>
<rect x="2.5" y="16" width="2.5" height="2.5"/><rect x="6.5" y="16" width="2.5" height="2.5"/><rect x="15" y="16" width="2.5" height="2.5"/>
<rect x="11" y="8" width="11" height="11.5" fill="none"/></g>
<rect x="11" y="7.5" width="11" height="12" fill="#c2e7ff"/>
<g fill="#001d35"><rect x="11" y="7.5" width="2" height="12"/><rect x="13" y="10" width="2.5" height="2.5"/><rect x="17" y="10" width="2.5" height="2.5"/><rect x="13" y="14" width="2.5" height="2.5"/><rect x="17" y="14" width="2.5" height="2.5"/><rect x="20" y="7.5" width="2" height="12"/></g>
</svg>
<div class="t" style="left:1971px;top:33px;font-size:22px;color:#001d35;letter-spacing:0.85px;-webkit-text-stroke:0.7px #001d35">Condividi</div>
<svg style="left:2101px;top:42px" width="13" height="7"><path d="M0 0 L13 0 L6.5 7Z" fill="#001d35"/></svg>
<svg style="left:2165px;top:21px" width="50" height="50" viewBox="0 0 50 50">
<defs><clipPath id="av"><circle cx="25" cy="24.5" r="23.5"/></clipPath></defs>
<g clip-path="url(#av)">
<rect width="50" height="50" fill="#f6f4f2"/>
<path d="M28 0 H50 V50 H36Z" fill="#ebe4de"/>
<path d="M8 39 Q5 28 9 17 Q13 6 23 4 Q33 4 37 13 Q41 24 40 37 L30 37 L18 38Z" fill="#4b2d21"/>
<ellipse cx="24.8" cy="20" rx="8.4" ry="12" fill="#ecc0a2"/>
<path d="M18 30 H31 L33 37 H17Z" fill="#dfa887"/>
<path d="M20.5 25.5 Q25 28 29.5 25.5" stroke="#fff" stroke-width="1.6" fill="none"/><circle cx="21.5" cy="17.5" r="1" fill="#5a3a2c"/><circle cx="28" cy="17.5" r="1" fill="#5a3a2c"/>
<path d="M0 50 V40 Q4 36 12 35 Q18 37 25 37 Q32 37 38 34 Q45 33 50 38 V50Z" fill="#141110"/>
</g></svg>
<div style="position:absolute;left:23px;top:98px;width:2110px;height:61px;background:#eff2f7;border-radius:30.5px"></div>
<div style="position:absolute;left:37px;top:107px;width:57px;height:42px;background:#ecf0f7"></div>
<svg style="left:50px;top:114px" width="26" height="26" viewBox="0 0 26 26"><circle cx="11" cy="11" r="7.2" fill="none" stroke="#38393a" stroke-width="2.1"/><path d="M16.2 16.2 L23.5 23.5" fill="none" stroke="#38393a" stroke-width="2.1"/></svg>
<svg style="left:105px;top:121px" width="22" height="19" viewBox="0 0 22 19"><path d="M7.3 1.9 L2.4 6.7 L7.3 11.6" fill="none" stroke="#38393a" stroke-width="2.1"/><path d="M2.4 6.7 H14.3 A4.95 4.95 0 0 1 14.3 16.6 H5.3" fill="none" stroke="#38393a" stroke-width="2.1"/></svg>
<svg style="left:154px;top:121px" width="22" height="19" viewBox="0 0 22 19"><path d="M14.2 1.9 L19.1 6.7 L14.2 11.6" fill="none" stroke="#38393a" stroke-width="2.1"/><path d="M19.1 6.7 H7.1 A4.95 4.95 0 0 0 7.1 16.6 H16.4" fill="none" stroke="#38393a" stroke-width="2.1"/></svg>
<svg style="left:201px;top:118px" width="26" height="24" viewBox="0 0 26 24"><path d="M6.4 8.4 V2.1 H19.1 V8.4" fill="none" stroke="#38393a" stroke-width="2.1"/><path d="M6.4 16.3 H1.9 V10.9 Q1.9 8.4 4.4 8.4 H21.2 Q23.7 8.4 23.7 10.9 V16.3 H19.1" fill="none" stroke="#38393a" stroke-width="2.1"/><rect x="6.4" y="14.7" width="12.7" height="6.4" fill="none" stroke="#38393a" stroke-width="2.1"/><circle cx="20.1" cy="11.4" r="1.1" fill="#38393a"/></svg>
<svg style="left:249px;top:117px" width="24" height="28" viewBox="0 0 24 28"><rect x="7.5" y="1.6" width="14" height="5.1" rx="1.6" fill="none" stroke="#38393a" stroke-width="2.1"/><path d="M7.5 4.15 H4.6 Q2.6 4.15 2.6 6.1 V10 Q2.6 12 4.6 12 H12.4 Q14.4 12 14.4 14 V17.8" fill="none" stroke="#38393a" stroke-width="2.1"/><rect x="12" y="18.8" width="4.8" height="6.3" rx="1.5" fill="none" stroke="#38393a" stroke-width="2.1"/></svg>
<div class="t" style="left:300px;top:118px;font-size:22px;color:#38393a">100%</div>
<svg style="left:377px;top:125.5px" width="12" height="6.5"><path d="M0 0 L12 0 L6.0 6.5Z" fill="#38393a"/></svg>
<div style="position:absolute;left:409px;top:113px;width:2px;height:31px;background:#c7c7c7"></div>
<div class="t" style="left:432.5px;top:117px;font-size:20.5px;color:#38393a">€</div>
<div class="t" style="left:480px;top:117px;font-size:20px;color:#38393a">%</div>
<div class="t" style="left:523.5px;top:115px;font-size:19px;color:#38393a;letter-spacing:-0.5px;-webkit-text-stroke:0.6px #38393a">.0</div>
<svg style="left:537px;top:133px" width="14" height="10" viewBox="0 0 14 10"><path d="M13 5 H2 M5.5 1.2 L1.5 5 L5.5 8.8" fill="none" stroke="#38393a" stroke-width="2.1"/></svg>
<div class="t" style="left:572.5px;top:115px;font-size:19px;color:#38393a;letter-spacing:-0.5px;-webkit-text-stroke:0.6px #38393a">.00</div>
<svg style="left:586px;top:133px" width="14" height="10" viewBox="0 0 14 10"><path d="M1 5 H12 M8.5 1.2 L12.5 5 L8.5 8.8" fill="none" stroke="#38393a" stroke-width="2.1"/></svg>
<div class="t" style="left:622px;top:118px;font-size:19px;color:#38393a">123</div>
<div style="position:absolute;left:667px;top:113px;width:2px;height:31px;background:#c7c7c7"></div>
<div class="t" style="left:692px;top:116px;font-size:22.5px;color:#38393a">Prede...</div>
<svg style="left:794px;top:125px" width="12" height="6.5"><path d="M0 0 L12 0 L6.0 6.5Z" fill="#38393a"/></svg>
<div style="position:absolute;left:829px;top:113px;width:2px;height:31px;background:#c7c7c7"></div>
<div style="position:absolute;left:846px;top:127px;width:16px;height:2.4px;background:#38393a"></div>
<div style="position:absolute;left:878px;top:110px;width:52px;height:36px;border:2px solid #5f6368;border-radius:7px"></div>
<div class="t" style="left:892px;top:118px;font-size:21.5px;color:#38393a">10</div>
<svg style="left:944px;top:120px" width="16" height="16" viewBox="0 0 16 16"><path d="M8 0.5 V15.5 M0.5 8 H15.5" fill="none" stroke="#38393a" stroke-width="2.1"/></svg>
<div style="position:absolute;left:977px;top:113px;width:2px;height:31px;background:#c7c7c7"></div>
<div class="t" style="left:1000px;top:117.6px;font-size:22px;font-weight:bold;color:#38393a">B</div>
<svg style="left:1040px;top:110px" width="40" height="40" viewBox="1040 110 40 40"><path d="M1053.5 122.2 H1064.3 M1049 137.3 H1059.8 M1060.5 122.2 L1053.5 137.3" fill="none" stroke="#38393a" stroke-width="2.6"/></svg>
<svg style="left:1090px;top:115px" width="32" height="28" viewBox="1090 115 32 28"><path d="M1093.3 128.4 H1118" fill="none" stroke="#38393a" stroke-width="2.3"/><path d="M1099.8 124.8 Q1099.8 121.2 1105.3 121.2 Q1110.8 121.2 1110.8 124.8" fill="none" stroke="#38393a" stroke-width="2.5"/><path d="M1099.8 132 Q1099.8 137.8 1105.3 137.8 Q1110.8 137.8 1110.8 132" fill="none" stroke="#38393a" stroke-width="2.5"/></svg>
<svg style="left:1140px;top:112px" width="30" height="26" viewBox="1140 112 30 26"><path d="M1149.2 133.6 L1155.5 119 L1161.8 133.6 M1151.3 128.3 H1159.7" fill="none" stroke="#38393a" stroke-width="2.2" stroke-linejoin="bevel"/></svg>
<div style="position:absolute;left:1139px;top:137px;width:35px;height:6px;background:#000"></div>
<div style="position:absolute;left:1186px;top:113px;width:2px;height:31px;background:#c7c7c7"></div>
<svg style="left:1200px;top:108px" width="34" height="30" viewBox="1200 108 34 30"><path d="M1214.5 117.6 L1221.6 124.6 L1214.5 131.5 L1207.4 124.6Z" fill="none" stroke="#38393a" stroke-width="2.2" stroke-linejoin="round"/><path d="M1207.4 124.6 H1221.6 L1214.5 131.5Z" fill="#38393a"/><path d="M1210.9 113.7 L1215 117.8" stroke="#38393a" stroke-width="2.4" stroke-linecap="round"/><path d="M1225.8 126.8 Q1223.2 130.2 1223.2 131.5 A2.6 2.6 0 0 0 1228.4 131.5 Q1228.4 130.2 1225.8 126.8Z" fill="#38393a"/></svg>
<div style="position:absolute;left:1201px;top:137px;width:35px;height:6px;background:#fff"></div>
<svg style="left:1254px;top:114px" width="32" height="32" viewBox="1254 114 32 32"><rect x="1260.1" y="120.3" width="19" height="18.8" fill="none" stroke="#38393a" stroke-width="2.2"/><path d="M1269.6 120.3 V139.1 M1260.1 129.7 H1279.1" fill="none" stroke="#38393a" stroke-width="2.2"/></svg>
<svg style="left:1304px;top:114px" width="34" height="32" viewBox="1304 114 34 32"><path d="M1317.6 120.4 H1311.6 V125.5 M1311.6 133.7 V139.1 H1317.6 M1324.2 120.4 H1330.2 V125.5 M1330.2 133.7 V139.1 H1324.2 M1309.6 129.6 H1316.4 M1313.5 126.4 L1316.7 129.6 L1313.5 132.8 M1332.2 129.6 H1325.4 M1328.3 126.4 L1325.1 129.6 L1328.3 132.8" fill="none" stroke="#a0a2a4" stroke-width="2"/></svg>
<svg style="left:1346px;top:126.5px" width="12" height="6.5"><path d="M0 0 L12 0 L6.0 6.5Z" fill="#a8abad"/></svg>
<div style="position:absolute;left:1368px;top:113px;width:2px;height:31px;background:#c7c7c7"></div>
<svg style="left:1380px;top:114px" width="30" height="30" viewBox="1380 114 30 30"><path d="M1385 120.3 H1406.2 M1385 125 H1400 M1385 129.7 H1406.2 M1385 134.5 H1400 M1385 139.3 H1406.2" fill="none" stroke="#38393a" stroke-width="2.1"/></svg>
<svg style="left:1417px;top:126.5px" width="12" height="6.5"><path d="M0 0 L12 0 L6.0 6.5Z" fill="#38393a"/></svg>
<svg style="left:1448px;top:118px" width="20" height="23" viewBox="0 0 20 23"><path d="M10 1 V16 M4 10.5 L10 16.5 L16 10.5 M1 21.5 H19" fill="none" stroke="#38393a" stroke-width="2.1"/></svg>
<svg style="left:1480px;top:126.5px" width="12" height="6.5"><path d="M0 0 L12 0 L6.0 6.5Z" fill="#38393a"/></svg>
<svg style="left:1505px;top:114px" width="30" height="30" viewBox="1505 114 30 30"><path d="M1512.9 121 V138.6 M1521.9 121 V125 M1521.9 134 V138.6 M1516.9 129.6 H1528.5 M1525 125.8 L1528.8 129.6 L1525 133.4" fill="none" stroke="#38393a" stroke-width="2.2"/></svg>
<svg style="left:1542px;top:126.5px" width="12" height="6.5"><path d="M0 0 L12 0 L6.0 6.5Z" fill="#38393a"/></svg>
<svg style="left:1570px;top:114px" width="30" height="30" viewBox="1570 114 30 30"><path d="M1577.6 132.4 L1582.7 120.8 L1587.8 132.4 M1579.3 128.3 H1586.1" fill="none" stroke="#38393a" stroke-width="2.2" stroke-linejoin="bevel"/></svg>
<svg style="left:1570px;top:128px" width="30" height="16" viewBox="1570 128 30 16"><path d="M1575 136.2 H1592.5 M1589.2 132.6 L1592.8 136.2 L1589.2 139.8" fill="none" stroke="#38393a" stroke-width="2.2"/></svg>
<svg style="left:1605px;top:126.5px" width="12" height="6.5"><path d="M0 0 L12 0 L6.0 6.5Z" fill="#38393a"/></svg>
<div style="position:absolute;left:1629px;top:113px;width:2px;height:31px;background:#c7c7c7"></div>
<svg style="left:1640px;top:118px" width="40" height="24" viewBox="1640 118 40 24"><path d="M1657.3 124.9 H1653.1 A5.05 5.05 0 0 0 1653.1 135 H1657.3 M1662.5 124.9 H1666.7 A5.05 5.05 0 0 1 1666.7 135 H1662.5 M1656 130 H1663.7" fill="none" stroke="#38393a" stroke-width="2.2"/></svg>
<svg style="left:1690px;top:110px" width="40" height="36" viewBox="1690 110 40 36"><path d="M1697.8 140.5 V120 Q1697.8 118.6 1699.2 118.6 H1718.6 Q1720 118.6 1720 120 V134.4 Q1720 135.8 1718.6 135.8 H1702.3Z" fill="none" stroke="#38393a" stroke-width="2.1" stroke-linejoin="round"/><path d="M1708.6 122.3 V132.6 M1703.4 127.5 H1713.8" fill="none" stroke="#38393a" stroke-width="2.1"/></svg>
<svg style="left:1740px;top:112px" width="34" height="34" viewBox="1740 112 34 34"><rect x="1748.35" y="120.05" width="18.4" height="18.9" rx="1.8" fill="none" stroke="#38393a" stroke-width="2.1"/><path d="M1752.5 127 V135.6 M1757.6 124 V135.6 M1762.8 131 V135.6" fill="none" stroke="#38393a" stroke-width="2.1"/></svg>
<svg style="left:1790px;top:114px" width="32" height="30" viewBox="1790 114 32 30"><path d="M1798.2 122.2 H1814.8 L1806.5 130.6Z" fill="none" stroke="#38393a" stroke-width="2.1" stroke-linejoin="miter"/><path d="M1806.5 130 V137.6" fill="none" stroke="#38393a" stroke-width="2.4" stroke-linecap="round"/></svg>
<svg style="left:1834px;top:114px" width="34" height="32" viewBox="1834 114 34 32"><path d="M1840.4 136.9 V121.5 Q1840.4 119.5 1842.4 119.5 H1856.5 Q1858.5 119.5 1858.5 121.5" fill="none" stroke="#38393a" stroke-width="2.1"/><rect x="1844.1" y="122.5" width="19.3" height="18.9" rx="2" fill="#38393a"/><g fill="#eff2f7"><rect x="1846.3" y="124.8" width="14.9" height="4"/><rect x="1846.3" y="130.9" width="3.5" height="3.3"/><rect x="1852" y="130.9" width="3.5" height="3.3"/><rect x="1857.7" y="130.9" width="3.5" height="3.3"/><rect x="1846.3" y="136.2" width="3.5" height="3"/><rect x="1852" y="136.2" width="3.5" height="3"/><rect x="1857.7" y="136.2" width="3.5" height="3"/></g></svg>
<svg style="left:1874px;top:126.5px" width="12" height="6.5"><path d="M0 0 L12 0 L6.0 6.5Z" fill="#38393a"/></svg>
<svg style="left:1908px;top:116px" width="22" height="26" viewBox="1908 116 22 26"><path d="M1925 121.8 H1913.6 L1920.2 129.6 L1913.6 137.4 H1925.3" fill="none" stroke="#38393a" stroke-width="2.5" stroke-linejoin="miter"/></svg>
<svg style="left:2082px;top:124px" width="18" height="11" viewBox="0 0 18 11"><path d="M1.5 9.5 L9 2 L16.5 9.5" fill="none" stroke="#1f1f1f" stroke-width="2.2"/></svg>
<svg style="left:2186px;top:117px" width="28" height="29" viewBox="0 0 28 29">
<path d="M3 0 H22 V6 H6 V22 H0 V3 Q0 0 3 0Z" fill="#4285f4"/>
<path d="M22 0 H25 Q28 0 28 3 V6 H22Z" fill="#1967d2"/>
<rect x="22" y="6" width="6" height="16" fill="#fbbc04"/>
<path d="M0 22 H6 V29 H3 Q0 29 0 26Z" fill="#188038"/>
<rect x="6" y="22" width="16" height="7" fill="#34a853"/>
<path d="M22 22 H28 L22 29Z" fill="#ea4335"/>
<rect x="6" y="6" width="16" height="16" fill="#fff"/>
<text x="14" y="19" text-anchor="middle" font-family="Liberation Sans" font-size="12" fill="#4285f4" stroke="#4285f4" stroke-width="0.4">31</text>
</svg>
<svg style="left:2186px;top:202px" width="29" height="30" viewBox="0 0 29 30">
<rect width="29" height="29.5" rx="3" fill="#fbbc04"/>
<circle cx="14.5" cy="13" r="6.5" fill="#fff"/>
<rect x="10.5" y="16" width="8" height="4" fill="#fff"/>
<rect x="11" y="21.5" width="7" height="2" fill="#fff"/>
</svg>
<svg style="left:2187px;top:288px" width="29" height="28" viewBox="0 0 29 28">
<circle cx="13.5" cy="14.5" r="10.7" fill="none" stroke="#1a73e8" stroke-width="4.2"/>
<path d="M8 14 L12.5 18.5 L26 4" fill="none" stroke="#1a73e8" stroke-width="4"/>
</svg>
<svg style="left:2188px;top:373px" width="24" height="29" viewBox="0 0 24 29">
<circle cx="12.5" cy="7" r="5.2" fill="#0b57d0"/>
<path d="M1 27.5 V22 Q1 14.5 8 14.5 H16 Q23 14.5 23 22 V27.5Z" fill="#7aa7f5"/>
<path d="M5 27.5 V21 Q5 14.5 11 14.5 H14 Q20 14.5 20 21 V27.5Z" fill="#0b57d0"/>
</svg>
<svg style="left:2190px;top:458px" width="21" height="30" viewBox="0 0 21 30">
<path d="M10.5 0 A10.5 10.5 0 0 1 21 10.5 Q21 16 14 22 L10.5 29 L7 22 Q0 16 0 10.5 A10.5 10.5 0 0 1 10.5 0Z" fill="#34a853"/>
<path d="M10.5 0 A10.5 10.5 0 0 1 20 6 L4 18 Q0 14 0 10.5 A10.5 10.5 0 0 1 10.5 0Z" fill="#fbbc04"/>
<path d="M3 3 A10.5 10.5 0 0 1 10.5 0 A10.5 10.5 0 0 1 20 6 L13 11.5 L3 3Z" fill="#4285f4"/>
<path d="M3 3 L8.5 8 L1 13.5 Q0 12 0 10.5 A10.5 10.5 0 0 1 3 3Z" fill="#ea4335"/>
<circle cx="10.5" cy="10.5" r="3.8" fill="#fff"/>
</svg>
<div style="position:absolute;left:2185px;top:540px;width:30px;height:2px;background:#dadce0"></div>
<svg style="left:2188px;top:596px" width="24" height="24" viewBox="0 0 24 24"><path d="M12 1 V23 M1 12 H23" stroke="#1f1f1f" stroke-width="2.4" fill="none"/></svg>
</body></html>
